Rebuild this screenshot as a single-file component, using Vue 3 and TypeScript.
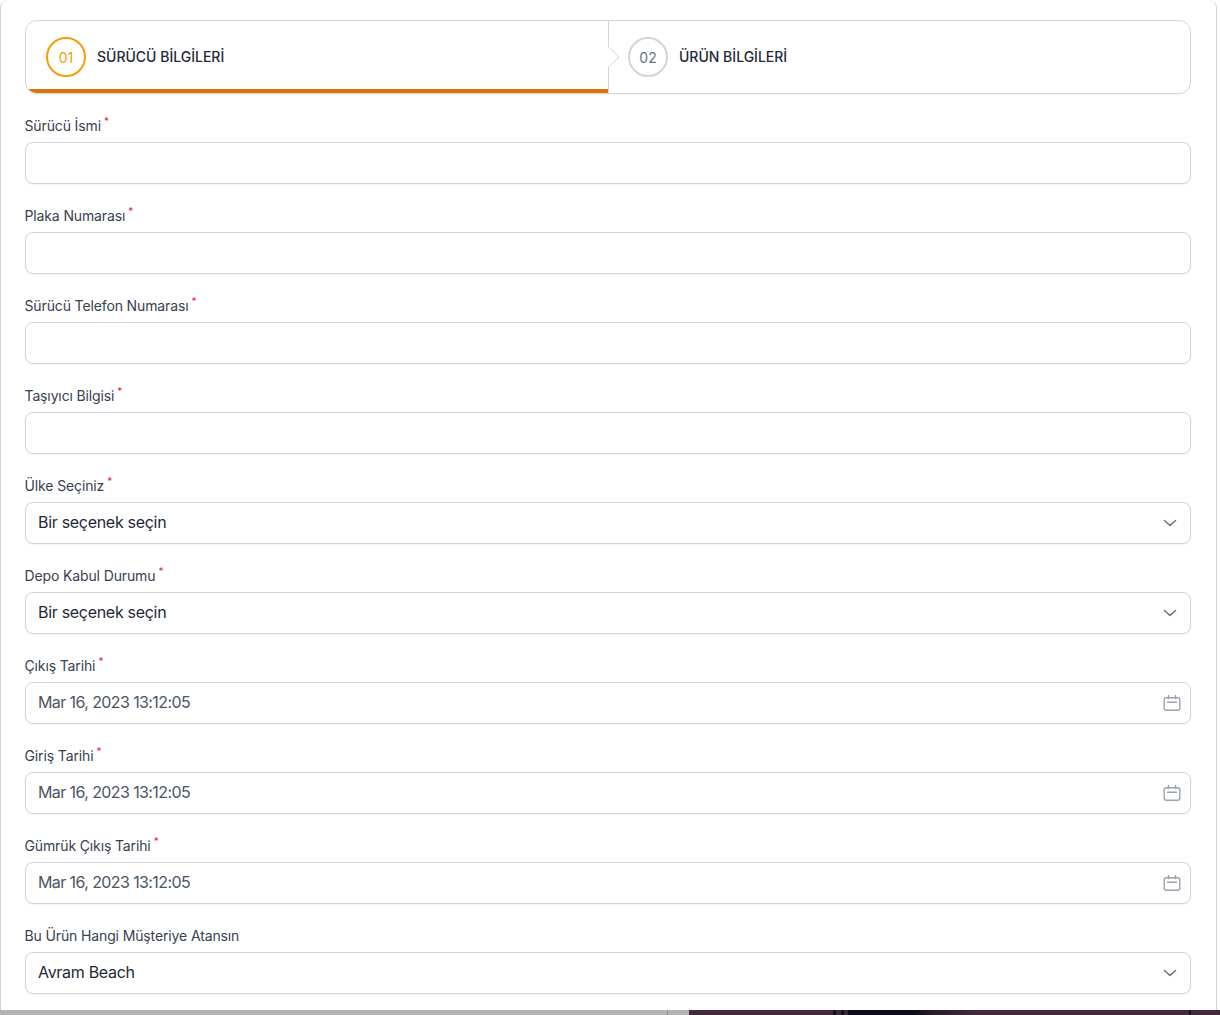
<script setup lang="ts">
interface Field {
  label: string
  required: boolean
  value: string
  kind: 'text' | 'select' | 'date'
}

const fields: Field[] = [
  { label: 'Sürücü İsmi', required: true, value: '', kind: 'text' },
  { label: 'Plaka Numarası', required: true, value: '', kind: 'text' },
  { label: 'Sürücü Telefon Numarası', required: true, value: '', kind: 'text' },
  { label: 'Taşıyıcı Bilgisi', required: true, value: '', kind: 'text' },
  { label: 'Ülke Seçiniz', required: true, value: 'Bir seçenek seçin', kind: 'select' },
  { label: 'Depo Kabul Durumu', required: true, value: 'Bir seçenek seçin', kind: 'select' },
  { label: 'Çıkış Tarihi', required: true, value: 'Mar 16, 2023 13:12:05', kind: 'date' },
  { label: 'Giriş Tarihi', required: true, value: 'Mar 16, 2023 13:12:05', kind: 'date' },
  { label: 'Gümrük Çıkış Tarihi', required: true, value: 'Mar 16, 2023 13:12:05', kind: 'date' },
  { label: 'Bu Ürün Hangi Müşteriye Atansın', required: false, value: 'Avram Beach', kind: 'select' },
]
</script>

<template>
  <div class="page">
    <div class="card">
      <div class="steps">
        <div class="step active">
          <span class="num">01</span>
          <span class="title">SÜRÜCÜ BİLGİLERİ</span>
        </div>
        <div class="step next">
          <svg class="chev" width="12" height="72" viewBox="0 0 12 72" fill="none">
            <path d="M0.5 0V26L11 36L0.5 46V72" fill="#fff" stroke="#d1d5db" stroke-width="1" />
          </svg>
          <span class="num">02</span>
          <span class="title">ÜRÜN BİLGİLERİ</span>
        </div>
      </div>
      <div v-for="f in fields" :key="f.label" class="field">
        <div class="label">{{ f.label }}<sup v-if="f.required" class="req">*</sup></div>
        <div class="control">
          <span class="value" :class="f.kind">{{ f.value }}</span>
          <svg v-if="f.kind === 'select'" class="chevron" width="24" height="24" viewBox="0 0 24 24" fill="none">
            <path d="M6.5 9.5L12 14.5L17.5 9.5" stroke="#6b7280" stroke-width="1.6" stroke-linecap="round" stroke-linejoin="round" />
          </svg>
          <svg v-if="f.kind === 'date'" class="calendar" width="20" height="20" viewBox="0 0 20 20" fill="none">
            <rect x="2.2" y="4.7" width="15.6" height="12.6" rx="2" stroke="#9ca3af" stroke-width="1.4" />
            <path d="M6.5 2.5v3M13.5 2.5v3M5.5 9.2h9" stroke="#9ca3af" stroke-width="1.4" stroke-linecap="round" />
          </svg>
        </div>
      </div>
    </div>
    <div class="strip">
      <div class="strip-gray"></div>
      <div class="strip-photo"></div>
    </div>
  </div>
</template>

<style>
html, body { margin: 0; background: #fff; overflow: hidden; }
</style>

<style scoped>
.page {
  width: 1220px;
  height: 1015px;
  overflow: hidden;
  font-family: Inter, "Liberation Sans", sans-serif;
}
.card {
  box-sizing: border-box;
  height: 1010px;
  margin-right: 3px;
  padding: 20px 25px 0 24px;
  background: #fff;
  border-left: 1px solid #d1d5db;
  border-right: 1px solid #d1d5db;
  border-top-left-radius: 8px;
  border-top-right-radius: 8px;
}
.steps {
  display: flex;
  height: 74px;
  box-sizing: border-box;
  border: 1px solid #d1d5db;
  border-radius: 12px;
  overflow: hidden;
  box-shadow: 0 1px 2px rgba(0,0,0,.05);
}
.step {
  position: relative;
  display: flex;
  align-items: center;
  gap: 11px;
  box-sizing: border-box;
  padding: 0 20px;
  width: 50%;
}
.step.active { border-bottom: 4px solid #d97706; padding-top: 4px; }
.step.next { flex: 1; }
.chev { position: absolute; left: 0; top: 0; }
.num {
  width: 40px;
  height: 40px;
  box-sizing: border-box;
  border-radius: 50%;
  border: 2px solid #d1d5db;
  color: #6b7280;
  font-size: 14px;
  display: flex;
  align-items: center;
  justify-content: center;
}
.active .num { border-color: #f59e0b; color: #f59e0b; }
.title { font-size: 14px; font-weight: 500; color: #1f2937; letter-spacing: 0; margin-top: -1px; }
.field { margin-top: 20px; }
.label { font-size: 14px; line-height: 24px; color: #374151; height: 28px; letter-spacing: -0.13px; margin-left: -0.5px; }
.req { color: #e11d48; font-size: 10px; margin-left: 3px; line-height: 0; vertical-align: 6px; }
.control {
  box-sizing: border-box;
  height: 42px;
  border: 1px solid #d1d5db;
  border-radius: 8px;
  padding: 0 8px 0 12px;
  display: flex;
  align-items: center;
  justify-content: space-between;
  box-shadow: 0 1px 2px rgba(0,0,0,.05);
  background: #fff;
}
.value { font-size: 16px; color: #1f2937; letter-spacing: -0.3px; margin-top: -2px; }
.value.date { color: #4b5563; letter-spacing: -0.6px; }
.strip { display: flex; height: 5px; }
.strip-gray {
  width: 689px;
  background: linear-gradient(90deg, #b3b3b3 0 667px, #8f8f8f 667px 668px, #b3b3b3 668px);
}
.strip-photo {
  flex: 1;
  background: linear-gradient(90deg,
    #43293a 0 144px,
    #14101c 144px 147px,
    #3a2a38 147px 152px,
    #14101c 152px 155px,
    #3a2a38 155px 159px,
    #0e0c1c 159px 225px,
    #2a1c2c 245px,
    #43293a 285px 500px,
    #14101c 500px 502px,
    #43293a 502px);
}
</style>
